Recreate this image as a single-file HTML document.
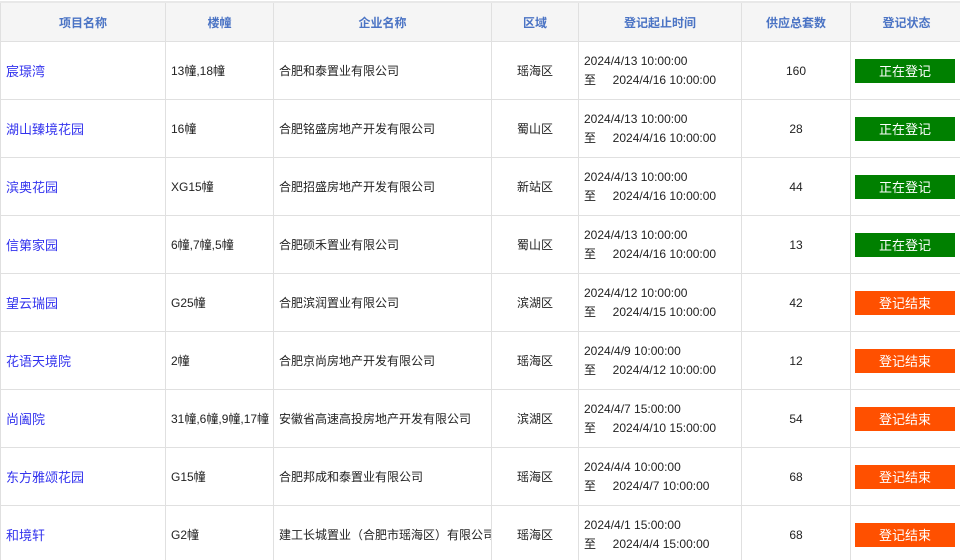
<!DOCTYPE html>
<html><head><meta charset="utf-8"><style>
html,body{margin:0;padding:0;background:#fff;width:960px;height:560px;overflow:hidden}
table{border-collapse:collapse;table-layout:fixed;width:962px;margin-top:1px;font-family:"Liberation Sans","Noto Sans CJK SC",sans-serif;font-size:12px;color:#222}
td,th{border:1px solid #e0e0e0;padding:0 5px;white-space:nowrap}
th{height:38px;background:#f5f5f5;color:#4a73c4;font-weight:bold;text-align:center;border-top:2px solid #e8e8e8}
td{height:57px;}
td.c{text-align:center}
a{color:#3333ee;text-decoration:none;font-size:13px}
.t div{line-height:19px}
.b{display:block;width:100px;height:24px;line-height:25px;text-align:center;color:#fff;font-size:13px;margin-left:-1px}
.g{background:#008000}.o{background:#ff5000}
</style></head><body>
<table>
<colgroup><col style="width:165px"><col style="width:108px"><col style="width:218px"><col style="width:87px"><col style="width:163px"><col style="width:109px"><col style="width:112px"></colgroup>
<tr><th>项目名称</th><th>楼幢</th><th>企业名称</th><th>区域</th><th>登记起止时间</th><th>供应总套数</th><th>登记状态</th></tr>
<tr><td><a>宸璟湾</a></td><td>13幢,18幢</td><td>合肥和泰置业有限公司</td><td class="c">瑶海区</td><td class="t"><div>2024/4/13 10:00:00</div><div>至&nbsp;&nbsp;&nbsp;&nbsp;&nbsp;2024/4/16 10:00:00</div></td><td class="c">160</td><td><span class="b g">正在登记</span></td></tr>
<tr><td><a>湖山臻境花园</a></td><td>16幢</td><td>合肥铭盛房地产开发有限公司</td><td class="c">蜀山区</td><td class="t"><div>2024/4/13 10:00:00</div><div>至&nbsp;&nbsp;&nbsp;&nbsp;&nbsp;2024/4/16 10:00:00</div></td><td class="c">28</td><td><span class="b g">正在登记</span></td></tr>
<tr><td><a>滨奥花园</a></td><td>XG15幢</td><td>合肥招盛房地产开发有限公司</td><td class="c">新站区</td><td class="t"><div>2024/4/13 10:00:00</div><div>至&nbsp;&nbsp;&nbsp;&nbsp;&nbsp;2024/4/16 10:00:00</div></td><td class="c">44</td><td><span class="b g">正在登记</span></td></tr>
<tr><td><a>信第家园</a></td><td>6幢,7幢,5幢</td><td>合肥硕禾置业有限公司</td><td class="c">蜀山区</td><td class="t"><div>2024/4/13 10:00:00</div><div>至&nbsp;&nbsp;&nbsp;&nbsp;&nbsp;2024/4/16 10:00:00</div></td><td class="c">13</td><td><span class="b g">正在登记</span></td></tr>
<tr><td><a>望云瑞园</a></td><td>G25幢</td><td>合肥滨润置业有限公司</td><td class="c">滨湖区</td><td class="t"><div>2024/4/12 10:00:00</div><div>至&nbsp;&nbsp;&nbsp;&nbsp;&nbsp;2024/4/15 10:00:00</div></td><td class="c">42</td><td><span class="b o">登记结束</span></td></tr>
<tr><td><a>花语天境院</a></td><td>2幢</td><td>合肥京尚房地产开发有限公司</td><td class="c">瑶海区</td><td class="t"><div>2024/4/9 10:00:00</div><div>至&nbsp;&nbsp;&nbsp;&nbsp;&nbsp;2024/4/12 10:00:00</div></td><td class="c">12</td><td><span class="b o">登记结束</span></td></tr>
<tr><td><a>尚阖院</a></td><td style="overflow:visible">31幢,6幢,9幢,17幢</td><td>安徽省高速高投房地产开发有限公司</td><td class="c">滨湖区</td><td class="t"><div>2024/4/7 15:00:00</div><div>至&nbsp;&nbsp;&nbsp;&nbsp;&nbsp;2024/4/10 15:00:00</div></td><td class="c">54</td><td><span class="b o">登记结束</span></td></tr>
<tr><td><a>东方雅颂花园</a></td><td>G15幢</td><td>合肥邦成和泰置业有限公司</td><td class="c">瑶海区</td><td class="t"><div>2024/4/4 10:00:00</div><div>至&nbsp;&nbsp;&nbsp;&nbsp;&nbsp;2024/4/7 10:00:00</div></td><td class="c">68</td><td><span class="b o">登记结束</span></td></tr>
<tr><td><a>和境轩</a></td><td>G2幢</td><td style="overflow:hidden">建工长城置业（合肥市瑶海区）有限公司</td><td class="c">瑶海区</td><td class="t"><div>2024/4/1 15:00:00</div><div>至&nbsp;&nbsp;&nbsp;&nbsp;&nbsp;2024/4/4 15:00:00</div></td><td class="c">68</td><td><span class="b o">登记结束</span></td></tr>
</table>
</body></html>
